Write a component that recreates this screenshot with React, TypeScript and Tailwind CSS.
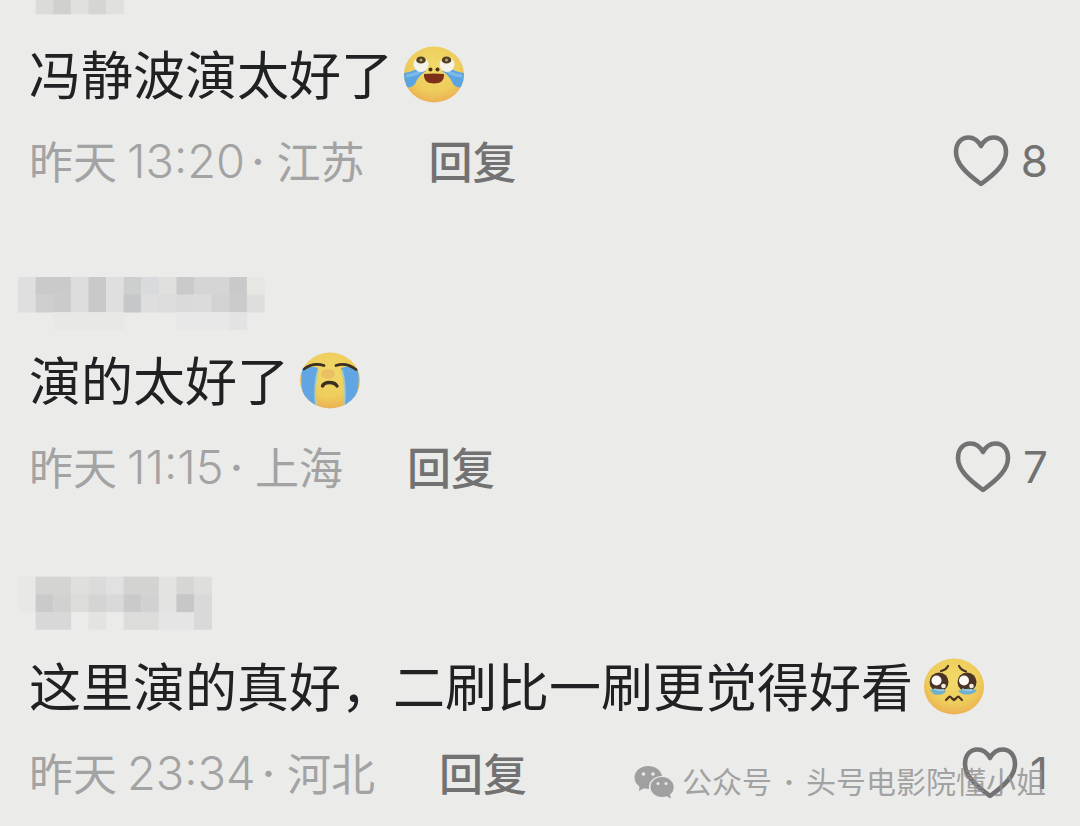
import { useId } from "react";
import type { ReactNode } from "react";

const LATIN_CJK = "font-['Inter','Noto_Sans_CJK_SC',sans-serif]";

type Cell = [col: number, row: number, cols: number, rows: number, fill: string];

function Mosaic({ cells, top, height, label }: { cells: Cell[]; top: number; height: number; label: string }) {
  const size = 17.6;
  return (
    <svg role="img" aria-label={label} width="270" height={height} viewBox={`0 0 270 ${height}`} className="block">
      {cells.map(([c, r, w, h, fill], i) => (
        <rect key={i} x={c * size} y={top + r * size} width={w * size + 0.3} height={h * size + 0.3} fill={fill} />
      ))}
    </svg>
  );
}

function Face({ children, label }: { children: ReactNode; label: string }) {
  const id = useId();
  return (
    <svg role="img" aria-label={label} width="62" height="58" viewBox="0 0 62 58" className="block shrink-0">
      <defs>
        <radialGradient id={id} cx="50%" cy="38%" r="64%">
          <stop offset="0" stopColor="#f1da6a" />
          <stop offset="0.65" stopColor="#eecd5c" />
          <stop offset="1" stopColor="#ecae52" />
        </radialGradient>
        <clipPath id={id + "c"}>
          <ellipse cx="31" cy="28.5" rx="30" ry="28" />
        </clipPath>
      </defs>
      <ellipse cx="31" cy="28.5" rx="30" ry="28" fill={`url(#${id})`} />
      <g clipPath={`url(#${id}c)`}>{children}</g>
    </svg>
  );
}

function JoyTears() {
  return (
    <Face label="笑哭">
      <path d="M14 23 Q6 27 0 27 L0 41 Q8 43 12 38 Q15 30 23 25 Z" fill="#5ba6e2" />
      <path d="M48 23 Q56 27 62 27 L62 41 Q54 43 50 38 Q47 30 39 25 Z" fill="#5ba6e2" />
      <path d="M3 30 Q12 29 18 25 M59 30 Q50 29 44 25" stroke="#7fb9e6" strokeWidth="3" fill="none" />
      <circle cx="18" cy="18.500" r="7.500" fill="#f5f2e8" />
      <circle cx="44" cy="18.500" r="7.500" fill="#f5f2e8" />
      <ellipse cx="18" cy="14" rx="4.800" ry="3.600" fill="#51401f" />
      <ellipse cx="43.500" cy="14" rx="4.800" ry="3.600" fill="#51401f" />
      <circle cx="18" cy="14" r="1.500" fill="#b6a374" />
      <circle cx="43.500" cy="14" r="1.500" fill="#b6a374" />
      <circle cx="27.500" cy="23.500" r="2" fill="#493416" />
      <circle cx="34.500" cy="23.500" r="2" fill="#493416" />
      <path d="M21 28 Q31 27 41 28 Q41.500 37.500 31 37.500 Q20.500 37.500 21 28 Z" fill="#7c3018" />
    </Face>
  );
}

function Sobbing() {
  return (
    <Face label="大哭">
      <ellipse cx="29" cy="22" rx="7" ry="5" fill="#e6a860" opacity="0.500" />
      <path d="M3 17 Q11 13 19 16 Q14 34 17 55 L9 53 Q0 38 3 17 Z" fill="#62a5e3" />
      <path d="M59 17 Q51 13 42 16 Q47 34 45 55 L53 53 Q62 38 59 17 Z" fill="#62a5e3" />
      <path d="M19 18 Q14.500 35 17 54 M43 18 Q47.500 35 45 54" stroke="#a9cbbf" strokeWidth="1.800" fill="none" />
      <path d="M5 17 Q14 10 25 13.500 M37 13.500 Q47 10 57 17.500" stroke="#3b2f20" strokeWidth="2.800" strokeLinecap="round" fill="none" />
      <path d="M23.500 34 Q25 30.500 30.500 30.500 Q36 30.500 38 34" stroke="#3b2f20" strokeWidth="3.400" strokeLinecap="round" fill="none" />
    </Face>
  );
}

function Pleading() {
  return (
    <Face label="可怜">
      <circle cx="16" cy="24" r="9.500" fill="#4b3326" />
      <circle cx="44" cy="24" r="9.500" fill="#4b3326" />
      <path d="M7 32 Q15 29 23 33 Q20 38 11 36.500 Z M35 33 Q43 29 54 32 Q50 38 39 36 Z" fill="#6db0cf" />
      <circle cx="13.500" cy="22.500" r="5" fill="#fbfaf5" />
      <circle cx="41" cy="22.500" r="5" fill="#fbfaf5" />
      <circle cx="20.500" cy="28" r="2.300" fill="#f1efe7" />
      <circle cx="48.500" cy="28" r="2.300" fill="#f1efe7" />
      <path d="M11 31 Q16 33 21 32 M39 31 Q44 33 49 32" stroke="#9acbe0" strokeWidth="1.800" fill="none" />
      <path d="M18 13 Q23 12 25 8 M36 8 Q38 12 43 13.500" stroke="#4b3420" strokeWidth="2.200" strokeLinecap="round" fill="none" />
      <path d="M23 42 L26 39 Q27.500 38 29 40.500 L31 42 L33 40.500 Q34.500 38 36 39 L39 42" stroke="#4b3420" strokeWidth="2.200" strokeLinecap="round" strokeLinejoin="round" fill="none" />
    </Face>
  );
}

function Heart() {
  return (
    <svg aria-hidden="true" width="56" height="54" viewBox="0 0 56 54" className="block shrink-0">
      <path
        d="M28 12 C25 6.500 20.500 3.500 15.500 3.500 C8 3.500 3 9.500 3 18 C3 29 12 38.500 28 50 C44 38.500 53 29 53 18 C53 9.500 48 3.500 40.500 3.500 C35.500 3.500 31 6.500 28 12 Z"
        fill="none"
        stroke="#727272"
        strokeWidth="4.600"
        strokeLinejoin="round"
      />
    </svg>
  );
}

function WeChatLogo() {
  return (
    <svg aria-hidden="true" width="40" height="34" viewBox="0 0 40 34" className="block shrink-0">
      <path d="M14 1 C6.500 1 0.500 6 0.500 12.500 C0.500 16.500 2.500 19.500 5.500 21.500 L5 26 L10 23.300 Q12.500 24 15 24 C14 16.500 20 11 28 11 C27 5 21 1 14 1 Z" fill="#a0a0a0" />
      <path d="M28 12 C21.500 12 16.500 16.500 16.500 22 C16.500 27.500 21.500 32 28 32 Q30.500 32 32.500 31.200 L37 33.500 L36 29.500 C38.500 27.700 39.700 25 39.700 22 C39.700 16.500 34.500 12 28 12 Z" fill="#a0a0a0" />
      <circle cx="9.500" cy="9" r="1.800" fill="#ebebea" />
      <circle cx="19" cy="9" r="1.800" fill="#ebebea" />
      <circle cx="24" cy="18.500" r="1.500" fill="#ebebea" />
      <circle cx="32" cy="18.500" r="1.500" fill="#ebebea" />
    </svg>
  );
}

interface CommentData {
  id: string;
  name: ReactNode;
  text: string;
  face: ReactNode;
  time: string;
  place: string;
  likes: number;
}

const comments: CommentData[] = [
  {
    id: "a",
    name: (
      <Mosaic
        label="用户名"
        top={-3.6}
        height={33}
        cells={[
          [1, 0, 1, 1, "#dbdbda"],
          [2, 0, 1, 1, "#d0d0cf"],
          [3, 0, 1, 1, "#e0e0df"],
          [4, 0, 1, 1, "#d5d5d4"],
          [5, 0, 1, 1, "#e0e0df"],
        ]}
      />
    ),
    text: "冯静波演太好了",
    face: <JoyTears />,
    time: "13:20",
    place: "江苏",
    likes: 8,
  },
  {
    id: "b",
    name: (
      <Mosaic
        label="用户名"
        top={8}
        height={70}
        cells={[
          [0, 0, 1, 2, "#dfdfdf"],
          [1, 0, 2, 1, "#c9cac9"],
          [1, 1, 1, 1, "#cfcfcf"],
          [2, 1, 1, 1, "#cacbca"],
          [3, 0, 1, 2, "#dcdcdc"],
          [4, 0, 1, 2, "#c9c9c9"],
          [5, 0, 1, 2, "#dfdfdf"],
          [6, 0, 1, 1, "#cdcfcf"],
          [6, 1, 1, 1, "#c4c8c8"],
          [7, 0, 1, 1, "#d9dadb"],
          [7, 1, 1, 1, "#dededf"],
          [8, 0, 1, 1, "#e0e0df"],
          [8, 1, 1, 1, "#dcdcdd"],
          [9, 0, 1, 1, "#cacaca"],
          [9, 1, 1, 1, "#dadada"],
          [10, 0, 2, 1, "#d4d5d4"],
          [10, 1, 1, 1, "#dbdbdb"],
          [11, 1, 1, 1, "#d1d2d1"],
          [12, 0, 1, 1, "#c8c9c8"],
          [12, 1, 1, 1, "#cacbca"],
          [13, 0, 1, 1, "#e6e6e3"],
          [13, 1, 1, 1, "#dededc"],
          [2, 2, 4, 1, "#e8e8e6"],
          [9, 2, 3, 1, "#e8e8e8"],
          [12, 2, 1, 1, "#e3e3e3"],
        ]}
      />
    ),
    text: "演的太好了",
    face: <Sobbing />,
    time: "11:15",
    place: "上海",
    likes: 7,
  },
  {
    id: "c",
    name: (
      <Mosaic
        label="用户名"
        top={1.6}
        height={70}
        cells={[
          [0, 0, 1, 2, "#e8e8e7"],
          [1, 0, 2, 1, "#d4d4d2"],
          [1, 1, 1, 1, "#cacaca"],
          [2, 1, 1, 1, "#d1d1d0"],
          [1, 2, 2, 1, "#d8d8d8"],
          [3, 0, 1, 1, "#dfdfde"],
          [3, 1, 1, 1, "#dcdcdb"],
          [4, 0, 1, 1, "#dbdbda"],
          [4, 1, 1, 1, "#d4d4d3"],
          [4, 2, 1, 1, "#e3e3e2"],
          [5, 0, 1, 1, "#e1e1e1"],
          [5, 1, 1, 1, "#d9d9d9"],
          [6, 0, 2, 1, "#d3d3d2"],
          [6, 1, 1, 1, "#cacaca"],
          [7, 1, 1, 1, "#d1d1d1"],
          [6, 2, 2, 1, "#dcdcdb"],
          [8, 0, 1, 2, "#e3e3e2"],
          [8, 2, 2, 1, "#e5e5e5"],
          [9, 0, 1, 1, "#d6d6d4"],
          [9, 1, 1, 1, "#c7c7c7"],
          [10, 0, 1, 1, "#dededd"],
          [10, 1, 1, 2, "#d9d9d9"],
        ]}
      />
    ),
    text: "这里演的真好，二刷比一刷更觉得好看",
    face: <Pleading />,
    time: "23:34",
    place: "河北",
    likes: 1,
  },
];

function Comment({ comment }: { comment: CommentData }) {
  return (
    <article>
      <div className="pb-[10px] pl-[18px]">{comment.name}</div>
      <div className="flex h-16 items-center gap-[10px] pl-[29px] text-[52px] leading-[64px] text-[#202122]">
        <p className="pt-1 whitespace-nowrap">{comment.text}</p>
        {comment.face}
      </div>
      <div className="mt-6 flex h-[60px] items-center pr-8 pl-[29px] text-[44px] leading-[60px] text-[#727272]">
        <div className="flex items-center whitespace-nowrap text-[#a3a3a3]">
          <span className="pt-1">昨天</span>
          <time className="ml-[10px] text-[47px] font-light">{comment.time}</time>
          <span className="mr-3 ml-1.5 font-medium">·</span>
          <span className="pt-1">{comment.place}</span>
        </div>
        <button type="button" className="ml-16 pt-1 font-medium whitespace-nowrap">
          回复
        </button>
        <button type="button" aria-label={`赞 ${comment.likes}`} className="ml-auto flex items-center gap-3">
          <Heart />
          <span>{comment.likes}</span>
        </button>
      </div>
    </article>
  );
}

export default function App() {
  return (
    <main lang="zh-CN" className={`relative flex min-h-screen flex-col gap-[78px] overflow-hidden bg-[#ebebea] ${LATIN_CJK}`}>
      {comments.map((c) => (
        <Comment key={c.id} comment={c} />
      ))}
      <div className="pointer-events-none absolute right-[34px] bottom-[22px] flex items-center gap-2 text-[30px] leading-[44px] text-[#8e8e8e]/80">
        <WeChatLogo />
        <span className="flex gap-3 whitespace-nowrap">
          <span>公众号</span>
          <span className="font-bold">·</span>
          <span>头号电影院懂小姐</span>
        </span>
      </div>
    </main>
  );
}
